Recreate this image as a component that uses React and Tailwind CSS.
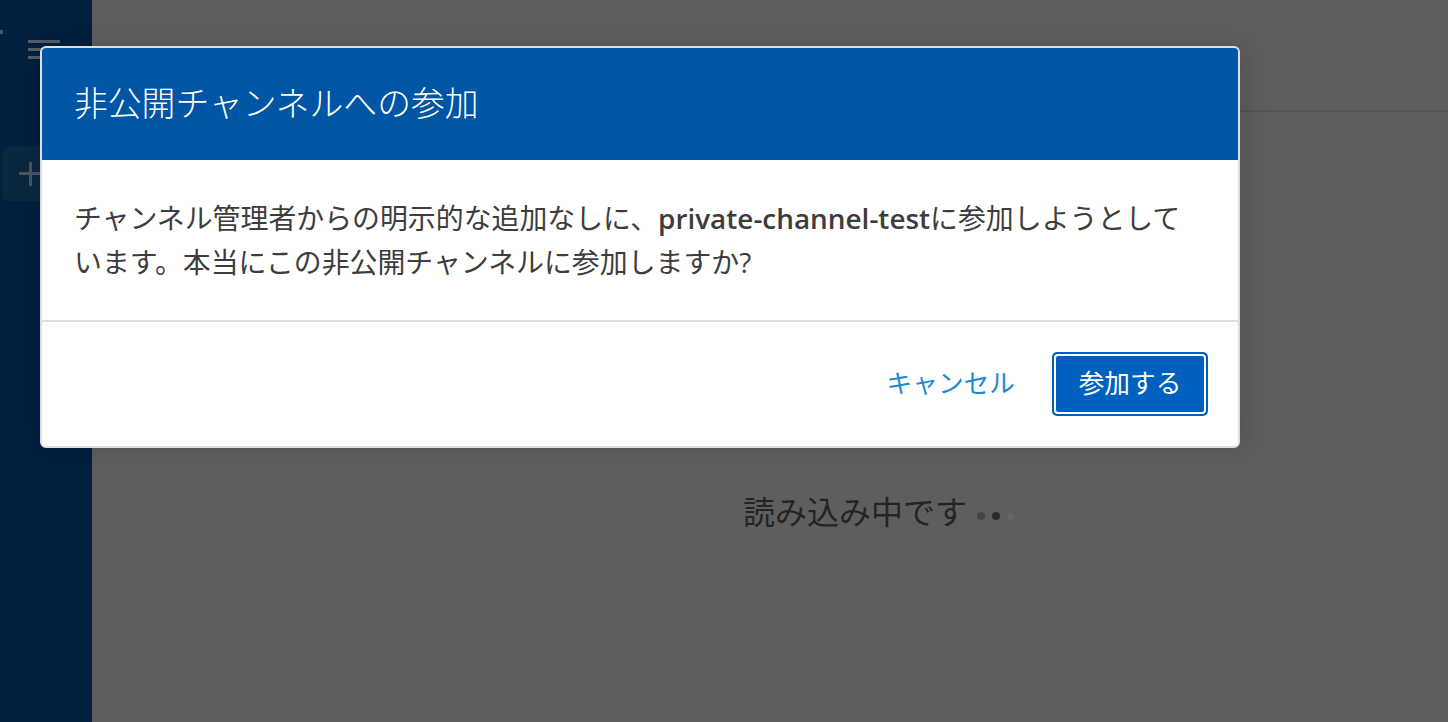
import React from 'react';

const font = { fontFamily: '"Open Sans", "Noto Sans CJK JP", sans-serif' };

function Sidebar() {
  return (
    <div className="w-[92px] shrink-0 bg-[#01203f] flex flex-col relative">
      <div className="absolute left-0 top-[30px] w-[3px] h-[4px] bg-[#4a5566]" />
      <div className="ml-[28px] mt-[40px] flex flex-col gap-[5px]">
        <div className="w-[32px] h-[3px] bg-[#545b66]" />
        <div className="w-[32px] h-[3px] bg-[#545b66]" />
        <div className="w-[32px] h-[3px] bg-[#545b66]" />
      </div>
      <div className="ml-[2px] mt-[87px] w-[60px] h-[55px] rounded-[6px] bg-[#0a2740] flex items-center pl-[17px]">
        <div className="relative w-[24px] h-[24px]">
          <div className="absolute left-0 top-[10px] w-[24px] h-[3px] bg-[#4c535b]" />
          <div className="absolute left-[10px] top-0 w-[3px] h-[24px] bg-[#4c535b]" />
        </div>
      </div>
    </div>
  );
}

function Main() {
  return (
    <div className="flex-1 bg-[#5e5e5e] flex flex-col">
      <div className="h-[112px] border-b-2 border-[#545454]" />
      <div className="flex items-center pl-[651px] pt-[380px] gap-[10px]" style={font}>
        <span className="text-[32px] text-[#242424] leading-[40px]">読み込み中です</span>
        <div className="flex items-center gap-[7px] mt-[8px]">
          <span className="w-[8px] h-[8px] rounded-full bg-[#444444]" />
          <span className="w-[8px] h-[8px] rounded-full bg-[#2c2c2c]" />
          <span className="w-[7px] h-[7px] rounded-full bg-[#666666]" />
        </div>
      </div>
    </div>
  );
}

function JoinModal() {
  return (
    <div
      className="absolute left-[40px] top-[46px] w-[1200px] bg-white rounded-[6px] border-2 border-[#dedede] shadow-[6px_0_24px_rgba(0,0,0,0.12)] overflow-hidden"
      style={font}
    >
      <div className="h-[112px] bg-[#0055a5] flex items-center px-[32px]">
        <h1 className="text-white text-[33.8px] font-light leading-none">非公開チャンネルへの参加</h1>
      </div>
      <div className="px-[32px] py-[36px] border-b-2 border-[#dddddd]">
        <p className="text-[27.9px] leading-[44px] text-[#3d3d3d] whitespace-nowrap">
          チャンネル管理者からの明示的な追加なしに、<span className="font-semibold">private-channel-test</span>に参加しようとして
          <br />
          います。本当にこの非公開チャンネルに参加しますか?
        </p>
      </div>
      <div className="flex justify-end items-center gap-[37px] pr-[30px] py-[30px]">
        <button className="text-[25.7px] text-[#1c8ad2] leading-none">キャンセル</button>
        <div className="bg-[#0060bd] p-[2px] rounded-[5px]">
          <button className="w-[152px] h-[60px] rounded-[4px] border-2 border-white bg-[#0060bd] text-white text-[25.7px] leading-none">
            参加する
          </button>
        </div>
      </div>
    </div>
  );
}

export default function App() {
  return (
    <div className="w-[1448px] h-[722px] flex relative overflow-hidden">
      <Sidebar />
      <Main />
      <JoinModal />
    </div>
  );
}
